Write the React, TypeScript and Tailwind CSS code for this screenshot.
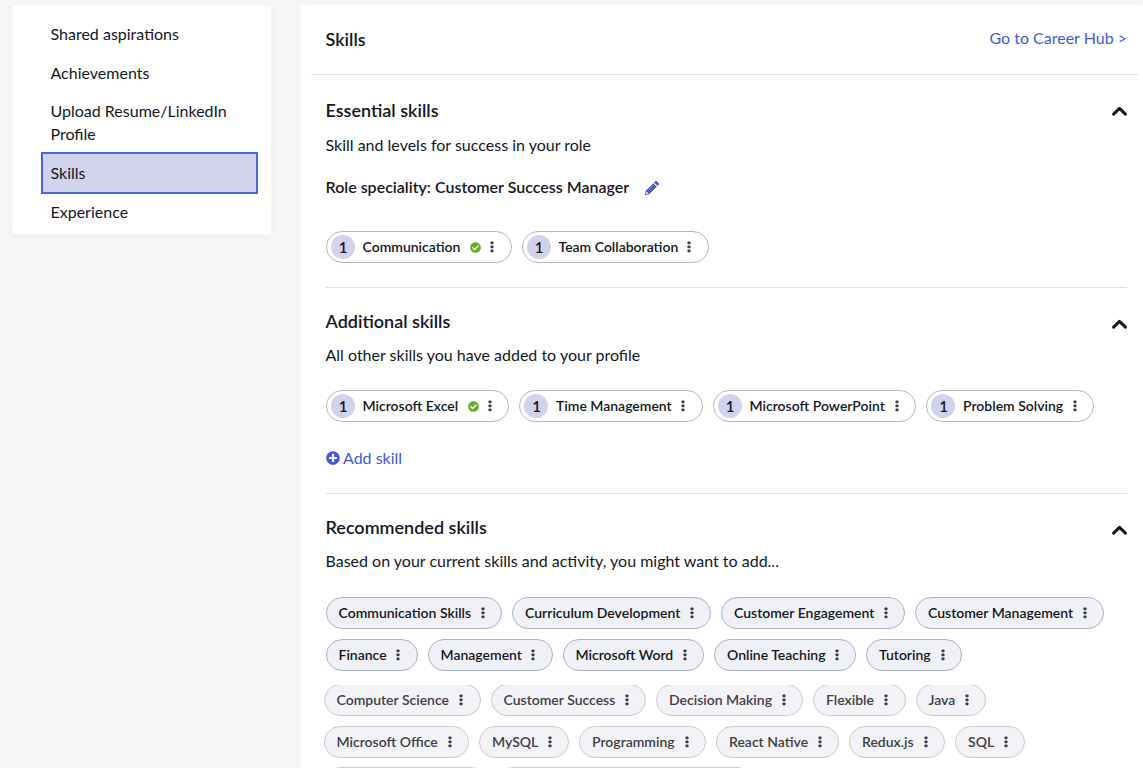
import React, { useState } from 'react';
import clsx from 'clsx';
import { FaCheckCircle, FaPlusCircle } from 'react-icons/fa';

interface Skill {
  name: string;
  width: string;
  level?: number;
  verified?: boolean;
}

const navItems = ['Shared aspirations', 'Achievements', 'Upload Resume/LinkedIn Profile', 'Skills', 'Experience'];

const essentialSkills: Skill[] = [
  { name: 'Communication', width: 'w-[186px]', level: 1, verified: true },
  { name: 'Team Collaboration', width: 'w-[187px]', level: 1 },
];

const additionalSkills: Skill[] = [
  { name: 'Microsoft Excel', width: 'w-[183.5px]', level: 1, verified: true },
  { name: 'Time Management', width: 'w-[183.5px]', level: 1 },
  { name: 'Microsoft PowerPoint', width: 'w-[203.5px]', level: 1 },
  { name: 'Problem Solving', width: 'w-[168px]', level: 1 },
];

const recommendedSkills: Skill[][] = [
  [
    { name: 'Communication Skills', width: 'w-[176.5px]' },
    { name: 'Curriculum Development', width: 'w-[199px]' },
    { name: 'Customer Engagement', width: 'w-[184px]' },
    { name: 'Customer Management', width: 'w-[189px]' },
  ],
  [
    { name: 'Finance', width: 'w-[92px]' },
    { name: 'Management', width: 'w-[125px]' },
    { name: 'Microsoft Word', width: 'w-[141.5px]' },
    { name: 'Online Teaching', width: 'w-[142px]' },
    { name: 'Tutoring', width: 'w-[96px]' },
  ],
];

const moreSkills: Skill[][] = [
  [
    { name: 'Computer Science', width: 'w-[157px]' },
    { name: 'Customer Success', width: 'w-[155.5px]' },
    { name: 'Decision Making', width: 'w-[147px]' },
    { name: 'Flexible', width: 'w-[92.5px]' },
    { name: 'Java', width: 'w-[70.5px]' },
  ],
  [
    { name: 'Microsoft Office', width: 'w-[145.5px]' },
    { name: 'MySQL', width: 'w-[90px]' },
    { name: 'Programming', width: 'w-[127px]' },
    { name: 'React Native', width: 'w-[123px]' },
    { name: 'Redux.js', width: 'w-[96px]' },
    { name: 'SQL', width: 'w-[70px]' },
  ],
];

const Dots = () => (
  <svg width="4" height="12" viewBox="0 0 4 12" fill="currentColor" className="shrink-0">
    <rect x="0.5" y="0.5" width="3" height="2.8" rx="0.8" />
    <rect x="0.5" y="4.5" width="3" height="2.8" rx="0.8" />
    <rect x="0.5" y="8.5" width="3" height="2.8" rx="0.8" />
  </svg>
);

const Chevron = () => (
  <svg width="15" height="10" viewBox="0 0 15 10" fill="none" stroke="#14171f" strokeWidth="3">
    <path d="M1.6 8.1 7.5 2.4l5.9 5.7" strokeLinecap="round" strokeLinejoin="round" />
  </svg>
);

const Pencil = () => (
  <svg width="14" height="14" viewBox="0 0 14 14" className="mt-px ml-[16px]">
    <path d="M0 14 .8 9.8 8.3 2.3l3.4 3.4-7.5 7.5z" fill="#4d54bd" />
    <path d="M9.1 1.5 10.2.4c.5-.5 1.3-.5 1.8 0l1.6 1.6c.5.5.5 1.3 0 1.8l-1.1 1.1z" fill="#4d54bd" />
    <path d="m1.5 10.5 2 2-1.7.4-.7-.7z" fill="#fff" />
    <path d="m3.6 9 4.8-4.8" stroke="#a9adde" strokeWidth="0.7" />
  </svg>
);

const SkillChip: React.FC<{ skill: Skill; muted?: boolean }> = ({ skill, muted = false }) => (
  <div
    className={clsx(
      'flex h-8 shrink-0 items-center rounded-full border pr-[16.5px] whitespace-nowrap text-[14px] font-semibold',
      skill.width,
      skill.level ? 'border-[#b4b9c5] bg-white pl-[4px]' : 'pl-[12px]',
      !skill.level && !muted && 'border-[#aeb4c6] bg-[#f0f1f6]',
      muted && 'border-[#ccccd1] bg-[#f2f2f7] text-[#3f4046]'
    )}
  >
    {skill.level && (
      <span className="mr-[8px] flex size-6 items-center justify-center rounded-full bg-[#d1d2ec] pl-px text-[15px]">{skill.level}</span>
    )}
    <span className="pb-[2px]">{skill.name}</span>
    <span className="ml-auto flex items-center gap-[9px] text-[#3a3d4a]">
      {skill.verified && <FaCheckCircle className="size-[11px] text-[#66ad2a]" />}
      <Dots />
    </span>
  </div>
);

interface SectionProps {
  title: string;
  description: string;
  className?: string;
  children: React.ReactNode;
}

const Section: React.FC<SectionProps> = ({ title, description, className, children }) => {
  const [open, setOpen] = useState(true);

  return (
    <section className={clsx('ml-[24.5px] w-[801.5px]', className)}>
      <div className="flex h-6 items-center justify-between">
        <h2 className="text-[18px] font-semibold">{title}</h2>
        <button onClick={() => setOpen(!open)} className={clsx('mt-[5px]', !open && 'rotate-180')} aria-label={title}>
          <Chevron />
        </button>
      </div>
      <p className="mt-[10px] h-6 text-base leading-6">{description}</p>
      {open && children}
    </section>
  );
};

const App: React.FC = () => {
  const [active, setActive] = useState('Skills');

  return (
    <div className="flex h-[768px] w-full overflow-hidden bg-[#f6f6f9] font-['Lato',sans-serif] text-base text-[#14171f]">
      <nav className="mt-[6px] ml-[13px] h-[228px] w-[258px] shrink-0 rounded-[2px] bg-white pt-[8.3px] pl-[28px] shadow-[0_0_3px_#fff,0_2px_10px_rgba(0,0,0,0.05)]">
        {navItems.map((item) => (
          <button
            key={item}
            onClick={() => setActive(item)}
            className={clsx(
              'flex w-[217px] items-center text-left leading-[23px]',
              item === active
                ? '-mt-px -mb-[2px] h-[42px] border-2 border-[#4d68df] bg-[#d2d3ec] pb-[2px] pl-[7.5px]'
                : 'px-[9.5px] py-[7.8px]'
            )}
          >
            {item}
          </button>
        ))}
      </nav>

      <main className="mt-[5px] ml-[30px] h-[780px] w-[842px] shrink-0 bg-white shadow-[0_0_4px_#fff,0_0_10px_rgba(0,0,0,0.05)]">
        <header className="mr-[5px] ml-[10px] flex h-[70px] items-center justify-between border-b border-[#e2e2e5] pr-[11px] pl-[14.5px]">
          <h1 className="text-[18px] font-semibold">Skills</h1>
          <a href="#" className="mb-[3px] text-[#3f5bdd]">Go to Career Hub &gt;</a>
        </header>

        <Section
          title="Essential skills"
          description="Skill and levels for success in your role"
          className="h-[213px] border-b border-[#e2e2e5] pt-[23px] [&_button]:mt-[2px] [&>p]:mt-[11px]"
        >
          <div className="mt-[18px] flex h-6 items-center font-semibold">
            Role speciality: Customer Success Manager
            <Pencil />
          </div>
          <div className="mt-[32px] flex gap-[10px]">
            {essentialSkills.map((skill) => <SkillChip key={skill.name} skill={skill} />)}
          </div>
        </Section>

        <Section title="Additional skills" description="All other skills you have added to your profile" className="h-[206px] border-b border-[#e2e2e5] pt-[21px]">
          <div className="mt-[23px] flex gap-[10px]">
            {additionalSkills.map((skill) => <SkillChip key={skill.name} skill={skill} />)}
          </div>
          <button className="mt-[24px] flex h-6 items-center gap-[3.5px] text-[#3f5bdd]">
            <FaPlusCircle className="size-[14px]" />
            Add skill
          </button>
        </Section>

        <Section title="Recommended skills" description="Based on your current skills and activity, you might want to add..." className="pt-[21px]">
          <div className="mt-[24px] flex flex-col gap-[10px]">
            {recommendedSkills.map((row, i) => (
              <div key={i} className="flex gap-[10px]">
                {row.map((skill) => <SkillChip key={skill.name} skill={skill} />)}
              </div>
            ))}
          </div>
          <div className="mt-[14px] -ml-[2px] flex h-[83px] flex-col gap-[10px] overflow-hidden">
            {moreSkills.map((row, i) => (
              <div key={i} className={clsx('flex shrink-0 gap-[10px]', i === 0 ? '-mt-px' : '-mb-px')}>
                {row.map((skill) => <SkillChip key={skill.name} skill={skill} muted />)}
              </div>
            ))}
            <div className="flex shrink-0 gap-[10px]">
              <div className="h-8 w-[163px] rounded-full border border-[#ccccd1]" />
              <div className="h-8 w-[257px] rounded-full border border-[#ccccd1]" />
            </div>
          </div>
        </Section>
      </main>
    </div>
  );
};

export default App;
